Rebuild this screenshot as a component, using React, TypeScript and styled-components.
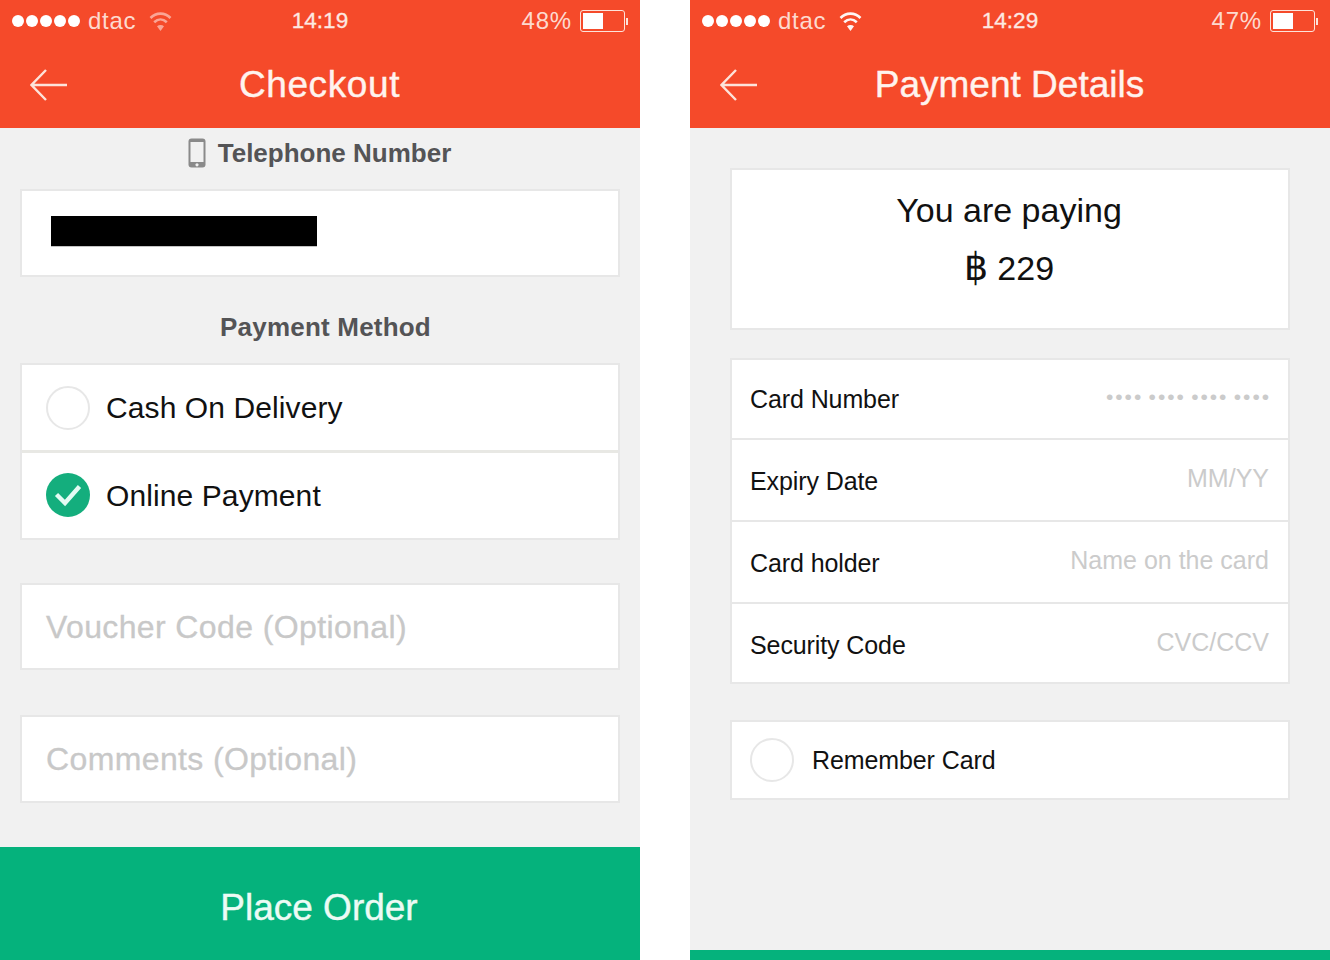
import styled, { createGlobalStyle } from 'styled-components';

const GlobalStyle = createGlobalStyle`
    html, body {
        margin: 0;
        padding: 0;
        background: #fff;
    }
    body {
        font-family: "Liberation Sans", Arial, sans-serif;
    }
`;

const BackArrow = () => (
    <svg width="38" height="34" viewBox="0 0 38 34" fill="none">
        <path d="M37 17H2M16 2 1.5 17 16 32" stroke="#fde3da" strokeWidth="2.4" />
    </svg>
);

const Wifi = ({ dim }: { dim?: boolean }) => (
    <svg width="23" height="22" viewBox="0 0 23 22" fill="none" stroke="#fff" opacity={dim ? 0.5 : 0.95}>
        <path d="M1.5 8C7 2.2 16 2.2 21.5 8" strokeWidth="2.6" />
        <path d="M5.2 12.2C9 8.6 14 8.6 17.8 12.2" strokeWidth="2.6" />
        <path d="M11.5 21 8 16.2C10 14.6 13 14.6 15 16.2Z" fill="#fff" stroke="none" />
    </svg>
);

const PhoneIcon = () => (
    <svg width="18" height="30" viewBox="0 0 18 30">
        <rect x="0.5" y="0.5" width="17" height="29" rx="3" fill="#8a8a8a" />
        <rect x="2.5" y="4" width="13" height="20" fill="#f1f1f1" />
        <circle cx="9" cy="26.8" r="1.6" fill="#f1f1f1" />
    </svg>
);

const Check = () => (
    <CheckIcon width="44" height="44" viewBox="0 0 44 44" fill="none">
        <circle cx="22" cy="22" r="22" fill="#14ae7d" />
        <path d="M10.5 21.5 19 30 33.5 13.5" stroke="#e4fbf3" strokeWidth="4.4" />
    </CheckIcon>
);

const StatusBar = ({ time, battery, dimWifi }: { time: string; battery: string; dimWifi?: boolean }) => (
    <Status>
        <StatusLeft>
            <Signal>
                {[0, 1, 2, 3, 4].map((i) => (
                    <Dot key={i} />
                ))}
            </Signal>
            <Carrier>dtac</Carrier>
            <Wifi dim={dimWifi} />
        </StatusLeft>
        <Time>{time}</Time>
        <StatusRight>
            <Percent>{battery}</Percent>
            <Battery>
                <BatteryFill />
            </Battery>
            <BatteryTip />
        </StatusRight>
    </Status>
);

const Header = ({
    title,
    spacing,
    time,
    battery,
    dimWifi,
}: {
    title: string;
    spacing: number;
    time: string;
    battery: string;
    dimWifi?: boolean;
}) => (
    <HeaderBar>
        <StatusBar time={time} battery={battery} dimWifi={dimWifi} />
        <Nav>
            <BackButton>
                <BackArrow />
            </BackButton>
            <NavTitle $spacing={spacing}>{title}</NavTitle>
        </Nav>
    </HeaderBar>
);

const Checkout = () => (
    <Phone>
        <Header title="Checkout" spacing={0.6} time="14:19" battery="48%" dimWifi />
        <CheckoutBody>
            <PhoneLabel>
                <PhoneIcon />
                <SectionTitle>Telephone Number</SectionTitle>
            </PhoneLabel>
            <InputCard $height={88}>
                <Redacted />
            </InputCard>
            <MethodTitle>Payment Method</MethodTitle>
            <MethodGroup>
                <MethodRow>
                    <Radio />
                    <MethodText>Cash On Delivery</MethodText>
                </MethodRow>
                <MethodRow $divided>
                    <Check />
                    <MethodText>Online Payment</MethodText>
                </MethodRow>
            </MethodGroup>
            <OptionalCard $height={87} $top={43} $nudge={2}>
                <OptionalText>Voucher Code (Optional)</OptionalText>
            </OptionalCard>
            <OptionalCard $height={88} $top={45} $nudge={0}>
                <OptionalText>Comments (Optional)</OptionalText>
            </OptionalCard>
            <PlaceOrder>Place Order</PlaceOrder>
        </CheckoutBody>
    </Phone>
);

const fields = [
    { label: 'Card Number', hint: '•••• •••• •••• ••••', dots: true, height: 78, nudge: 0 },
    { label: 'Expiry Date', hint: 'MM/YY', height: 82, nudge: 2 },
    { label: 'Card holder', hint: 'Name on the card', height: 82, nudge: 2 },
    { label: 'Security Code', hint: 'CVC/CCV', height: 80, nudge: 4 },
];

const PaymentDetails = () => (
    <Phone>
        <Header title="Payment Details" spacing={0} time="14:29" battery="47%" />
        <PaymentBody>
            <AmountCard>
                <AmountText>You are paying</AmountText>
                <AmountText>
                    <Baht>฿</Baht> 229
                </AmountText>
            </AmountCard>
            <FieldGroup>
                {fields.map((field, i) => (
                    <FieldRow key={field.label} $height={field.height} $divided={i > 0} $nudge={field.nudge}>
                        <FieldLabel>{field.label}</FieldLabel>
                        <FieldHint $dots={field.dots}>{field.hint}</FieldHint>
                    </FieldRow>
                ))}
            </FieldGroup>
            <RememberCard>
                <SmallRadio />
                <FieldLabel>Remember Card</FieldLabel>
            </RememberCard>
            <BottomBar />
        </PaymentBody>
    </Phone>
);

const App = () => (
    <>
        <GlobalStyle />
        <Page>
            <Checkout />
            <PaymentDetails />
        </Page>
    </>
);

export default App;

const Page = styled.div`
    display: flex;
    gap: 50px;
    width: 1330px;
    height: 960px;
    overflow: hidden;
`;

const Phone = styled.div`
    display: flex;
    flex-direction: column;
    width: 640px;
    height: 960px;
    background: #f1f1f1;
`;

const HeaderBar = styled.header`
    flex: none;
    height: 128px;
    background: #f54a2a;
    color: #fff;
`;

const Status = styled.div`
    display: grid;
    grid-template-columns: 1fr auto 1fr;
    align-items: center;
    height: 42px;
    padding: 0 12px;
`;

const StatusLeft = styled.div`
    display: flex;
    align-items: center;
`;

const Signal = styled.div`
    display: flex;
    gap: 2px;
`;

const Dot = styled.span`
    width: 12px;
    height: 12px;
    border-radius: 50%;
    background: #fff;
`;

const Carrier = styled.span`
    margin: 0 13px 0 8px;
    font-size: 24px;
    letter-spacing: 0.7px;
    color: #fddacf;
`;

const Time = styled.span`
    font-size: 22.5px;
    -webkit-text-stroke: 0.3px #fde9e2;
    color: #fde9e2;
`;

const StatusRight = styled.div`
    display: flex;
    align-items: center;
    justify-content: flex-end;
`;

const Percent = styled.span`
    margin-right: 8px;
    font-size: 24px;
    letter-spacing: 0.8px;
    color: #fddacf;
`;

const Battery = styled.div`
    box-sizing: border-box;
    width: 45px;
    height: 22px;
    padding: 2px;
    border: 1px solid #fde3da;
    border-radius: 3px;
`;

const BatteryFill = styled.div`
    width: 20px;
    height: 100%;
    background: #fff;
`;

const BatteryTip = styled.div`
    width: 2px;
    height: 7px;
    margin-left: 1px;
    background: #fde3da;
`;

const Nav = styled.div`
    position: relative;
    display: flex;
    align-items: center;
    justify-content: center;
    height: 86px;
`;

const BackButton = styled.div`
    position: absolute;
    top: 26px;
    left: 30px;
    display: flex;
`;

const NavTitle = styled.h1<{ $spacing: number }>`
    margin: 0 0 0 -1px;
    font-size: 37px;
    font-weight: 400;
    letter-spacing: ${(p) => p.$spacing}px;
    -webkit-text-stroke: 0.4px #fff3ee;
    color: #fff3ee;
`;

const CheckoutBody = styled.main`
    display: flex;
    flex: 1;
    flex-direction: column;
    align-items: center;
`;

const PhoneLabel = styled.div`
    display: flex;
    align-items: center;
    gap: 12px;
    height: 50px;
    margin-left: -1px;
`;

const SectionTitle = styled.h2`
    margin: 0;
    font-size: 26px;
    font-weight: 700;
    color: #545456;
`;

const MethodTitle = styled(SectionTitle)`
    margin: 36px 0 22px 11px;
    letter-spacing: 0.2px;
    line-height: 28px;
`;

const InputCard = styled.div<{ $height: number }>`
    box-sizing: border-box;
    flex: none;
    width: 600px;
    height: ${(p) => p.$height}px;
    padding: 25px 29px;
    background: #fff;
    border: 2px solid #e7e7e7;
    margin-top: 11px;
`;

const Redacted = styled.div`
    width: 266px;
    height: 30px;
    background: #000;
    box-shadow: 0 1px 0 #c4c4c4;
`;

const MethodGroup = styled.div`
    box-sizing: border-box;
    flex: none;
    width: 600px;
    background: #fff;
    border: 2px solid #e7e7e7;
`;

const MethodRow = styled.div<{ $divided?: boolean }>`
    display: flex;
    align-items: center;
    gap: 16px;
    box-sizing: border-box;
    height: ${(p) => (p.$divided ? 88 : 85)}px;
    padding-left: 24px;
    border-top: ${(p) => (p.$divided ? '3px solid #e8e8e4' : 'none')};
`;

const CheckIcon = styled.svg`
    margin-top: -1px;
`;

const Radio = styled.div`
    box-sizing: border-box;
    width: 44px;
    height: 44px;
    border: 2px solid #e7e7e7;
    border-radius: 50%;
`;

const SmallRadio = styled(Radio)`
    flex: none;
`;

const MethodText = styled.span`
    font-size: 30px;
    letter-spacing: 0.1px;
    color: #111;
`;

const OptionalCard = styled.div<{ $height: number; $top: number; $nudge: number }>`
    display: flex;
    align-items: center;
    box-sizing: border-box;
    flex: none;
    width: 600px;
    height: ${(p) => p.$height}px;
    margin-top: ${(p) => p.$top}px;
    padding: ${(p) => p.$nudge}px 0 0 24px;
    background: #fff;
    border: 2px solid #e7e7e7;
`;

const OptionalText = styled.span`
    font-size: 32px;
    letter-spacing: 0.38px;
    -webkit-text-stroke: 0.3px #c8c8c8;
    color: #c8c8c8;
`;

const PlaceOrder = styled.button`
    flex: none;
    width: 100%;
    height: 113px;
    margin-top: auto;
    padding: 8px 2px 0 0;
    border: none;
    background: #05b27c;
    font-family: inherit;
    font-size: 37px;
    -webkit-text-stroke: 0.4px #ecfbf5;
    color: #ecfbf5;
`;

const PaymentBody = styled.main`
    display: flex;
    flex: 1;
    flex-direction: column;
    align-items: center;
    padding-top: 40px;
`;

const AmountCard = styled.div`
    box-sizing: border-box;
    flex: none;
    width: 560px;
    height: 162px;
    padding: 20px 2px 0 0;
    background: #fff;
    border: 2px solid #e7e7e7;
    text-align: center;
`;

const AmountText = styled.div`
    height: 57px;
    font-size: 34px;
    line-height: 40px;
    color: #111;
`;

const Baht = styled.span`
    font-size: 38px;
`;

const FieldGroup = styled.div`
    box-sizing: border-box;
    flex: none;
    width: 560px;
    margin-top: 28px;
    background: #fff;
    border: 2px solid #e7e7e7;
`;

const FieldRow = styled.div<{ $height: number; $divided?: boolean; $nudge: number }>`
    display: flex;
    align-items: center;
    justify-content: space-between;
    box-sizing: border-box;
    height: ${(p) => p.$height}px;
    padding: ${(p) => p.$nudge}px 19px 0 18px;
    border-top: ${(p) => (p.$divided ? '2px solid #e7e7e7' : 'none')};
`;

const FieldLabel = styled.span`
    font-size: 25px;
    letter-spacing: -0.1px;
    color: #111;
`;

const FieldHint = styled.span<{ $dots?: boolean }>`
    margin-top: -5px;
    margin-right: ${(p) => (p.$dots ? '-2px' : '0')};
    font-size: ${(p) => (p.$dots ? '21px' : '25px')};
    letter-spacing: ${(p) => (p.$dots ? '1.95px' : '0')};
    word-spacing: ${(p) => (p.$dots ? '-2.4px' : '0')};
    color: #cbcbcb;
`;

const RememberCard = styled.div`
    display: flex;
    align-items: center;
    gap: 18px;
    box-sizing: border-box;
    flex: none;
    width: 560px;
    height: 80px;
    margin-top: 36px;
    padding-left: 18px;
    background: #fff;
    border: 2px solid #e7e7e7;
`;

const BottomBar = styled.div`
    flex: none;
    width: 100%;
    height: 10px;
    margin-top: auto;
    background: #05b27c;
`;
